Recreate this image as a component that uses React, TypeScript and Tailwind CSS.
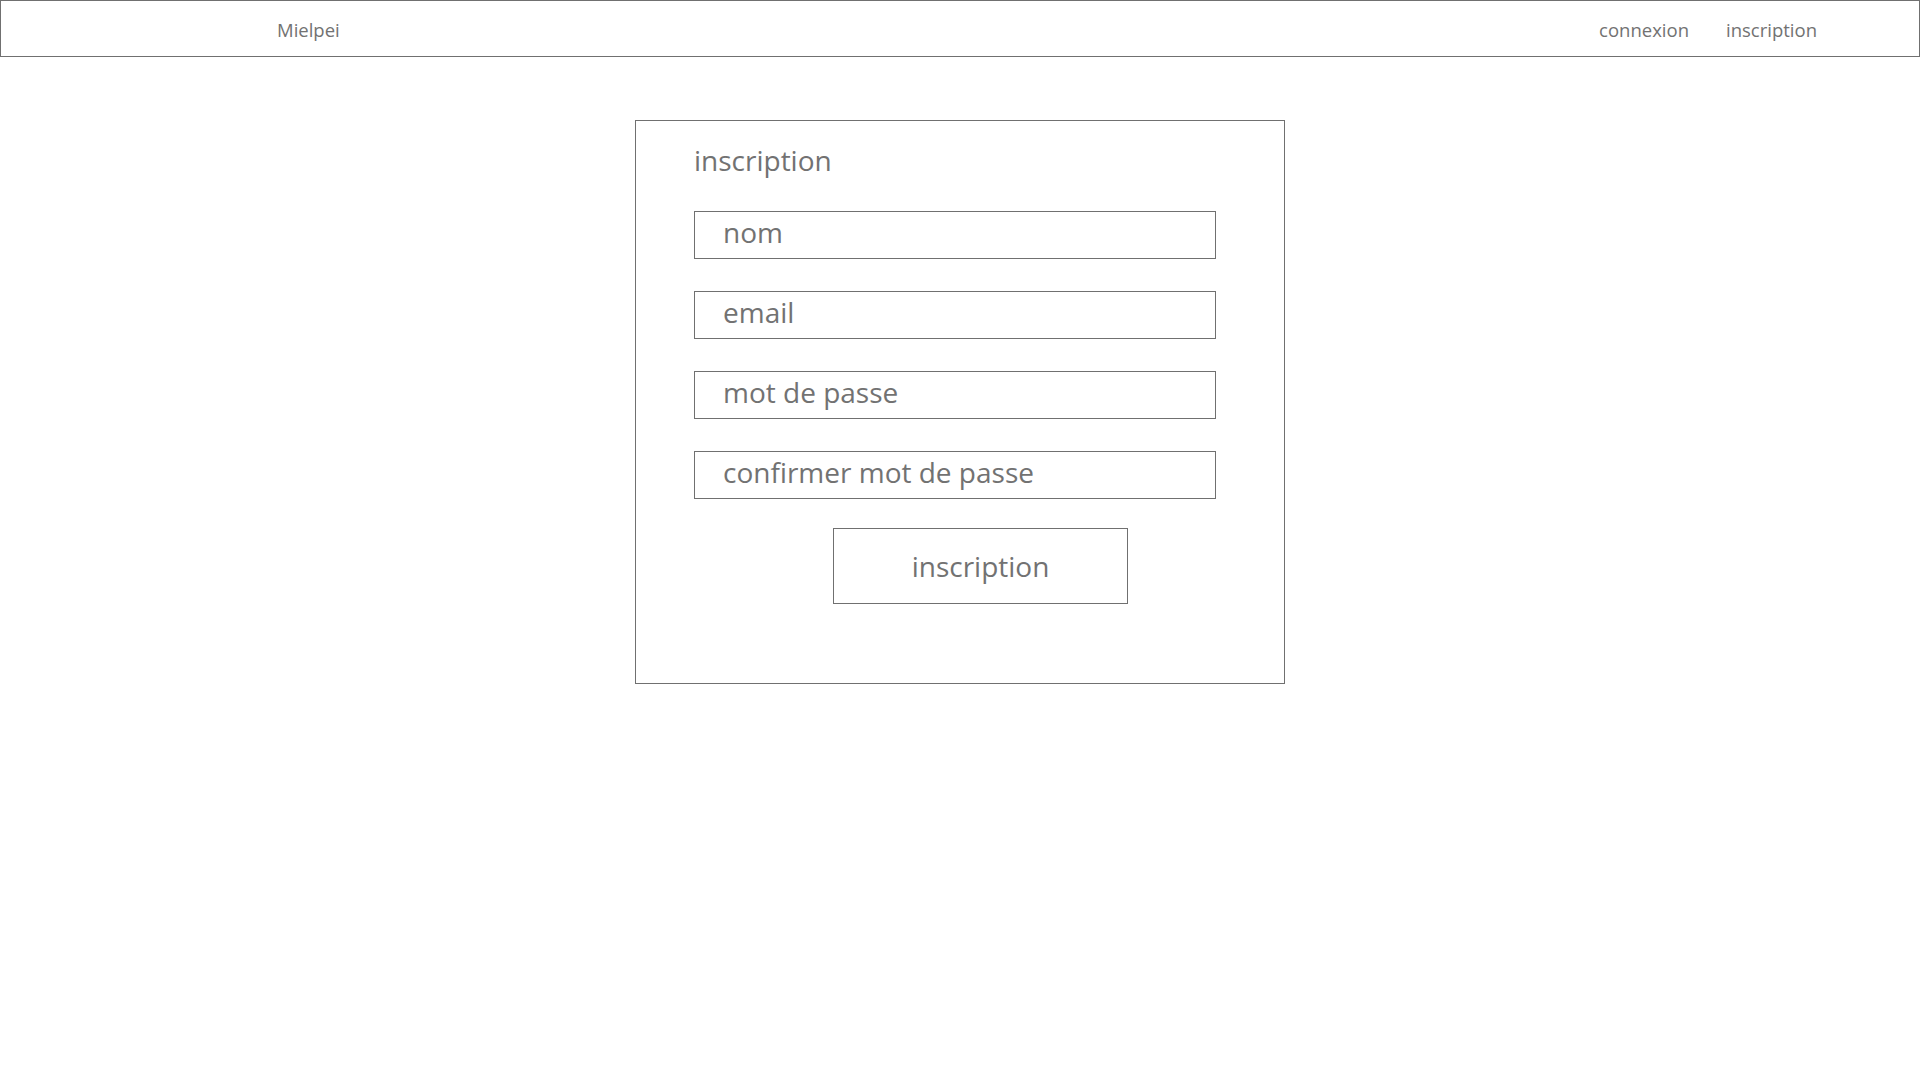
import React from "react";

const font = { fontFamily: '"Open Sans", "Noto Sans", sans-serif' };

function Field({ label }: { label: string }) {
  return (
    <div className="flex h-[48px] w-[522px] items-center border border-[#707070] pb-[7px] pl-[28px] text-[28px] leading-none text-[#727272]">
      {label}
    </div>
  );
}

export default function App() {
  return (
    <div className="min-h-screen w-full bg-white" style={font}>
      <header className="flex h-[57px] w-full items-center border border-[#707070] pl-[276px] pr-[102px] pt-[2px] text-[18.5px] text-[#727272]">
        <span>Mielpei</span>
        <nav className="ml-auto flex items-center gap-[37px]">
          <span>connexion</span>
          <span>inscription</span>
        </nav>
      </header>
      <main className="mt-[63px] flex justify-center">
        <div className="flex h-[564px] w-[650px] flex-col border border-[#707070] pl-[58px] pt-[20px]">
          <h1 className="text-[28px] leading-[38px] text-[#727272]">inscription</h1>
          <div className="mt-[32px] flex flex-col gap-[32px]">
            <Field label="nom" />
            <Field label="email" />
            <Field label="mot de passe" />
            <Field label="confirmer mot de passe" />
          </div>
          <button className="ml-[139px] mt-[29px] flex h-[76px] w-[295px] items-center justify-center border border-[#707070] bg-white text-[28px] text-[#727272]">
            inscription
          </button>
        </div>
      </main>
    </div>
  );
}
